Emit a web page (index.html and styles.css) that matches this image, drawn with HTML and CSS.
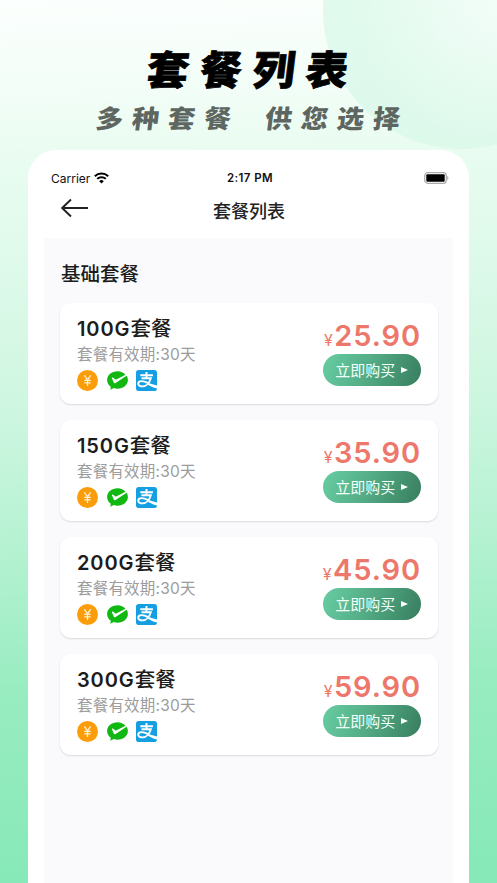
FILE: index.html
```html
<!DOCTYPE html>
<html lang="zh-CN">
<head>
<meta charset="utf-8">
<title>套餐列表</title>
<link rel="stylesheet" href="styles.css">
</head>
<body>
<svg class="sprite" aria-hidden="true">
  <symbol id="coin" viewBox="0 0 21 21">
    <circle cx="10.5" cy="10.5" r="10.5" fill="#fb9d0a"/>
    <path d="M7.400 5.300l3.100 4.600 3.100-4.600M10.500 9.900v6.200M7.300 10.400h6.400M7.300 12.900h6.400" fill="none" stroke="#fff1d2" stroke-width="1.300"/>
  </symbol>
  <symbol id="wechat" viewBox="0 0 21 21">
    <path d="M10.500 1.200C4.700 1.200.1 5.100.1 10c0 2.800 1.400 5.200 3.700 6.800L3.300 19.800l3.500-1.700c1.200.4 2.400.6 3.700.6 5.800 0 10.400-3.900 10.400-8.700 0-1.500-.5-3-1.300-4.300L8.200 13.200c-.5.300-1 .100-1.200-.3L4.900 8.200c-.2-.6.3-.9.800-.6l2.600 1.700c.3.200.6.200.9.100l9.300-4.600C16.600 2.600 13.700 1.200 10.500 1.200z" fill="#11b811"/>
  </symbol>
  <symbol id="alipay" viewBox="0 0 21 21">
    <rect width="21" height="21" rx="2.800" fill="#159fe3"/>
    <path d="M4.300 5.200h12.600M10.500 2v6.300M5.500 8.300h9.300c-1.200 4.300-4.300 8.100-8.200 8.100-2.700 0-4.400-1-4.400-2.800 0-1.600 1.600-2.500 3.500-2.500 2.600 0 4.500 1 7.200 2.300" fill="none" stroke="#fff" stroke-width="1.900"/>
    <path d="M11.400 12.300c2.300 1.200 6 2.500 9.600 3.200v2.900c-4-1-7.600-2.700-10.300-4.500z" fill="#fff"/>
  </symbol>
</svg>
<div class="poster">
  <header class="hero">
    <h1 class="hero-title">套餐列表</h1>
    <p class="hero-sub"><span>多种套餐</span><span>供您选择</span></p>
  </header>
  <main class="phone">
    <div class="status">
      <span class="carrier">Carrier
        <svg width="15" height="12" viewBox="0 0 15 12"><g fill="none" stroke="#000" stroke-width="2"><path d="M.8 4.300a9.600 9.600 0 0 1 13.400 0"/><path d="M3.200 6.900a6.100 6.100 0 0 1 8.600 0"/></g><path d="M7.500 11.500L5.200 9.200a3.300 3.300 0 0 1 4.600 0z"/></svg>
      </span>
      <span class="time">2:17 PM</span>
      <svg class="battery" width="25" height="12" viewBox="0 0 25 12"><rect x=".7" y=".7" width="21.600" height="10.600" rx="3" fill="#fff" stroke="#aaa" stroke-width="1.200"/><rect x="2.300" y="2.200" width="18.400" height="7.600" rx="1" fill="#000"/><path d="M23.200 4v4c1.700-.8 1.700-3.200 0-4z" fill="#aaa"/></svg>
    </div>
    <nav class="nav">
      <svg width="28" height="20" viewBox="0 0 28 20" fill="none" stroke="#222" stroke-width="1.900"><path d="M27 10H1.200M10 1.500L1.200 10l8.800 8.500"/></svg>
      <h2>套餐列表</h2>
    </nav>
    <section class="content">
      <h3>基础套餐</h3>
      <div class="plans">
        <article class="plan">
          <div class="info"><h4>100G<b>套餐</b></h4><p>套餐有效期:30天</p><div class="pays"><svg><use href="#coin"/></svg><svg><use href="#wechat"/></svg><svg><use href="#alipay"/></svg></div></div>
          <div class="buy"><div class="price"><small>¥</small>25.90</div><button>立即购买<i></i></button></div>
        </article>
        <article class="plan">
          <div class="info"><h4>150G<b>套餐</b></h4><p>套餐有效期:30天</p><div class="pays"><svg><use href="#coin"/></svg><svg><use href="#wechat"/></svg><svg><use href="#alipay"/></svg></div></div>
          <div class="buy"><div class="price"><small>¥</small>35.90</div><button>立即购买<i></i></button></div>
        </article>
        <article class="plan">
          <div class="info"><h4>200G<b>套餐</b></h4><p>套餐有效期:30天</p><div class="pays"><svg><use href="#coin"/></svg><svg><use href="#wechat"/></svg><svg><use href="#alipay"/></svg></div></div>
          <div class="buy"><div class="price"><small>¥</small>45.90</div><button>立即购买<i></i></button></div>
        </article>
        <article class="plan">
          <div class="info"><h4>300G<b>套餐</b></h4><p>套餐有效期:30天</p><div class="pays"><svg><use href="#coin"/></svg><svg><use href="#wechat"/></svg><svg><use href="#alipay"/></svg></div></div>
          <div class="buy"><div class="price"><small>¥</small>59.90</div><button>立即购买<i></i></button></div>
        </article>
      </div>
    </section>
  </main>
</div>
</body>
</html>
```
FILE: styles.css
```css
* { box-sizing: border-box; margin: 0; padding: 0; }
body { font-family: Inter, "Noto Sans CJK SC", sans-serif; color: #1c1c1c; overflow: hidden; }
svg { display: block; flex: none; }
.sprite { position: absolute; width: 0; height: 0; }
.poster {
  width: 497px; height: 883px; overflow: hidden;
  display: flex; flex-direction: column;
  background:
    radial-gradient(circle at 500px 0, rgba(250, 255, 252, .7) 0, rgba(250, 255, 252, 0) 150px),
    radial-gradient(circle at 462px 10px, rgba(216, 248, 232, .75) 138.500px, transparent 139.500px),
    linear-gradient(178deg, #fbfffd 0, #f5fef9 8%, #e9fcf1 18%, #dbf9e8 33%, #cdf6e0 46%, #b5f2d2 61%, #98ecc0 77%, #86e9b7 100%);
}
.hero { height: 150px; padding-top: 46px; flex: none; }
.hero-title {
  font-size: 42px; line-height: 50px; font-weight: 900;
  letter-spacing: 11px; color: #000; padding-left: 147px;
  -webkit-text-stroke: .8px #000; white-space: nowrap;
  transform: skewX(-7deg) scaleY(.96);
}
.hero-sub {
  display: flex; gap: 25px; padding-left: 96px; margin-top: 9px;
  font-size: 27px; line-height: 30px; font-weight: 900;
  letter-spacing: 9px; color: #5d6660; white-space: nowrap;
  transform: skewX(-7deg) scaleY(.94);
}
.phone {
  flex: 1; margin: 0 28px; padding: 16px 16px 0 17px;
  background: #fff; border-radius: 28px 28px 0 0;
  display: flex; flex-direction: column;
}
.status {
  height: 24px; padding: 0 4px 0 6px; flex: none;
  display: grid; grid-template-columns: 1fr auto 1fr; align-items: center;
  font-size: 12px; letter-spacing: 0; color: #111;
}
.carrier { display: flex; align-items: center; gap: 4px; }
.time { font-weight: 600; font-size: 11.500px; line-height: 16px; letter-spacing: .4px; }
.battery { justify-self: end; }
.nav {
  height: 48px; flex: none; padding-left: 16px; padding-right: 44px;
  display: flex; align-items: flex-start; padding-top: 8px;
}
.nav h2 { flex: 1; text-align: center; font-size: 18px; line-height: 28px; font-weight: 500; color: #222; }
.content { flex: 1; background: #fafafc; padding: 22px 15px 0 16px; margin-left: -1px; }
.content h3 { font-size: 19.500px; line-height: 28px; font-weight: 500; padding-left: 1px; }
.plans { display: flex; flex-direction: column; gap: 16px; margin-top: 15px; }
.plan {
  height: 101px; background: #fff; border-radius: 11px;
  box-shadow: 0 1px 2px rgba(0, 0, 0, .13);
  padding: 12px 17px 0;
  display: flex; justify-content: space-between;
}
.info h4 { font-size: 20px; line-height: 28px; font-weight: 600; letter-spacing: .9px; }
.info h4 b { font-size: 20.500px; font-weight: 500; letter-spacing: 0; }
.info p { font-size: 15.500px; line-height: 24px; color: #9c9c9c; letter-spacing: .2px; }
.pays { display: flex; gap: 8.500px; margin-top: 3px; }
.pays svg { width: 21px; height: 21px; }
.buy { display: flex; flex-direction: column; align-items: flex-end; }
.price {
  height: 39px; display: flex; align-items: baseline;
  font-size: 29px; line-height: 42px; font-weight: 600; letter-spacing: .9px; color: #ed776b;
}
.price small { font-size: 16px; font-weight: 400; margin-right: .5px; }
.buy button {
  width: 98.500px; height: 32px; border: 0; border-radius: 16px;
  display: flex; align-items: center; justify-content: center; gap: 6px;
  background: linear-gradient(110deg, #67cda2 0, #54ad87 45%, #377d5e 100%);
  color: #f3fff8; font: 400 15px/22px "Noto Sans CJK SC", sans-serif;
}
.buy i { border-left: 7px solid #fff; border-top: 3.500px solid transparent; border-bottom: 3.500px solid transparent; }
```
